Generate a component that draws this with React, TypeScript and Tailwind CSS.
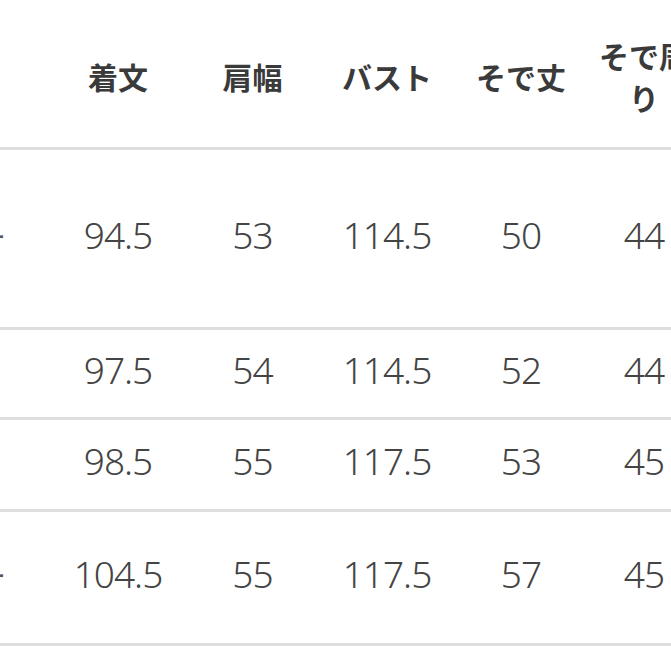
const headers = ["着文", "肩幅", "バスト", "そで丈", "そで周り"];

const rows = [
  { label: "フリー", h: "h-[180px]", values: ["94.5", "53", "114.5", "50", "44"] },
  { label: "", h: "h-[90px]", values: ["97.5", "54", "114.5", "52", "44"] },
  { label: "", h: "h-[92px]", values: ["98.5", "55", "117.5", "53", "45"] },
  { label: "ロングー", h: "h-[134px]", values: ["104.5", "55", "117.5", "57", "45"] },
];

const widths = ["w-[134px]", "w-[135px]", "w-[134px]", "w-[134px]", "w-[112px]"];

export default function App() {
  return (
    <div className="w-[671px] h-[671px] overflow-hidden bg-white">
      <div className="w-[800px]">
        <div className="flex h-[150px] border-b-[3px] border-[#dedede]">
          <div className="w-[100px] ml-[-49px] shrink-0" />
          {headers.map((h, i) => (
            <div
              key={h}
              className={`${widths[i]} shrink-0 px-2 flex items-center justify-center text-center pt-[4px] text-[30px] leading-[42px] font-bold text-[#3a3a3a] [font-family:'Noto_Sans_CJK_JP',sans-serif]`}
            >
              {h}
            </div>
          ))}
        </div>
        {rows.map((r, ri) => (
          <div key={ri} className={`flex ${r.h} border-b-[3px] border-[#dedede]`}>
            <div className="w-[100px] ml-[-49px] shrink-0 flex items-center justify-end pr-[45px] pb-[7px] overflow-hidden whitespace-nowrap text-[30px] text-[#555] [font-family:'Noto_Sans_CJK_JP',sans-serif]">
              {r.label}
            </div>
            {r.values.map((v, i) => (
              <div
                key={i}
                className={`${widths[i]} shrink-0 flex items-center justify-center pb-[7px] text-[37px] font-light tracking-[-1px] text-[#444] [font-family:'Noto_Sans',sans-serif]`}
              >
                {v}
              </div>
            ))}
          </div>
        ))}
      </div>
    </div>
  );
}
